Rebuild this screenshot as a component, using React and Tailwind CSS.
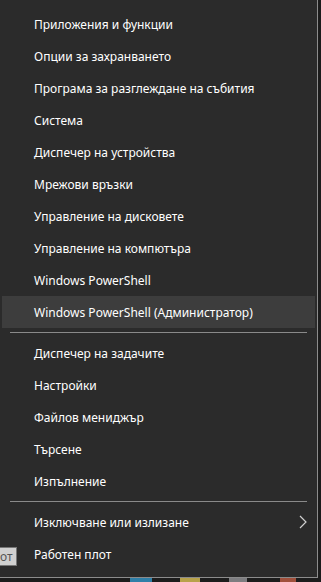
import React from "react";

const group1 = [
  "Приложения и функции",
  "Опции за захранването",
  "Програма за разглеждане на събития",
  "Система",
  "Диспечер на устройства",
  "Мрежови връзки",
  "Управление на дисковете",
  "Управление на компютъра",
  "Windows PowerShell",
  "Windows PowerShell (Администратор)",
];
const group2 = ["Диспечер на задачите", "Настройки", "Файлов мениджър", "Търсене", "Изпълнение"];

function Item({ label, active, children }) {
  return (
    <div
      className={
        "h-8 flex items-center pl-[32px] pr-2 pt-[2px] mx-[2px] text-[12px] text-white " +
        (active ? "bg-[#3d3d3d]" : "")
      }
    >
      <span className="flex-1">{label}</span>
      {children}
    </div>
  );
}

export default function App() {
  return (
    <div
      className="relative w-[321px] h-[582px] bg-[#1c1c1c] overflow-hidden"
      style={{ fontFamily: '"Noto Sans", "Open Sans", sans-serif' }}
    >
      <div className="w-[318px] h-[578px] bg-[#2b2b2b] border-r border-b border-[#8c8c8c] flex flex-col pt-2">
        {group1.map((l, i) => (
          <Item key={l} label={l} active={i === 9} />
        ))}
        <div className="mx-[10px] mt-1 mb-1 h-px bg-[#8a8a8a]" />
        {group2.map((l) => (
          <Item key={l} label={l} />
        ))}
        <div className="mx-[10px] mt-1 mb-1 h-px bg-[#8a8a8a]" />
        <Item label="Изключване или излизане">
          <svg width="8" height="14" viewBox="0 0 8 14" className="mr-0 mb-[2px]">
            <path d="M1 1 L7 7 L1 13" fill="none" stroke="#d0d0d0" strokeWidth="1.2" />
          </svg>
        </Item>
        <Item label="Работен плот" />
      </div>
      <div className="absolute left-0 bottom-0 w-[321px] h-[4px]">
        <div className="absolute left-[130px] w-[22px] h-[4px] bg-[#2f7fa8]" />
        <div className="absolute left-[180px] w-[20px] h-[4px] bg-[#b8a24a]" />
        <div className="absolute left-[229px] w-[18px] h-[4px] bg-[#7d7d80]" />
        <div className="absolute left-[280px] w-[16px] h-[4px] bg-[#a0503c]" />
      </div>
      <div className="absolute left-0 top-[547px] w-[17px] h-[19px] bg-[#d0d0d0] border border-[#767676] border-l-0 flex items-center text-[12px] text-[#555] overflow-hidden">
        <span className="pl-0">от</span>
      </div>
    </div>
  );
}
